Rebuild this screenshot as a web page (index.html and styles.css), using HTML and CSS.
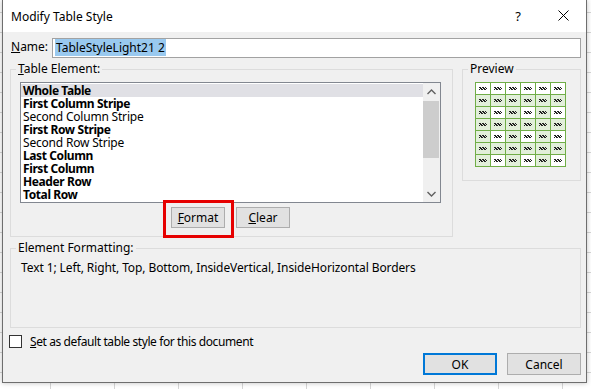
FILE: index.html
```html
<!DOCTYPE html>
<html>
    <head>
        <link rel="stylesheet" href="styles.css">
    </head>
    <body>
        <div class="dialog">
            <div class="titlebar">
                <span class="title">Modify Table Style</span>
                <span class="help">?</span>
                <span class="close">
                    <svg width="11" height="11" viewBox="0 0 11 11"><path d="M0.5 0.5 L10.5 10.5 M10.5 0.5 L0.5 10.5" stroke="#000" stroke-width="1" fill="none"/></svg>
                </span>
            </div>

            <div class="content">
                <div class="name-row">
                    <label class="name-label"><u>N</u>ame:</label>
                    <div class="text-input"><span class="selected">TableStyleLight21 2</span></div>
                </div>

                <div class="main">
                    <fieldset class="group table-element">
                        <legend><u>T</u>able Element:</legend>
                        <div class="listbox">
                            <div class="items">
                                <div class="item bold active">Whole Table</div>
                                <div class="item bold">First Column Stripe</div>
                                <div class="item">Second Column Stripe</div>
                                <div class="item bold">First Row Stripe</div>
                                <div class="item">Second Row Stripe</div>
                                <div class="item bold">Last Column</div>
                                <div class="item bold">First Column</div>
                                <div class="item bold">Header Row</div>
                                <div class="item bold">Total Row</div>
                            </div>
                            <div class="scrollbar">
                                <div class="arrow">
                                    <svg width="9" height="6" viewBox="0 0 9 6"><path d="M0.5 5 L4.5 1 L8.5 5" stroke="#606060" stroke-width="1.4" fill="none"/></svg>
                                </div>
                                <div class="thumb"></div>
                                <div class="track"></div>
                                <div class="arrow">
                                    <svg width="9" height="6" viewBox="0 0 9 6"><path d="M0.5 1 L4.5 5 L8.5 1" stroke="#606060" stroke-width="1.4" fill="none"/></svg>
                                </div>
                            </div>
                        </div>
                        <div class="list-buttons">
                            <span class="highlight"><button class="btn"><u>F</u>ormat</button></span>
                            <button class="btn"><u>C</u>lear</button>
                        </div>
                    </fieldset>

                    <fieldset class="group preview">
                        <legend>Preview</legend>
                        <div class="preview-grid">
                            <div class="cell"></div><div class="cell"></div><div class="cell"></div><div class="cell"></div><div class="cell"></div><div class="cell"></div>
                            <div class="cell g"></div><div class="cell g"></div><div class="cell g"></div><div class="cell g"></div><div class="cell g"></div><div class="cell g"></div>
                            <div class="cell g"></div><div class="cell"></div><div class="cell g"></div><div class="cell"></div><div class="cell g"></div><div class="cell"></div>
                            <div class="cell g"></div><div class="cell g"></div><div class="cell g"></div><div class="cell g"></div><div class="cell g"></div><div class="cell g"></div>
                            <div class="cell g"></div><div class="cell"></div><div class="cell g"></div><div class="cell"></div><div class="cell g"></div><div class="cell"></div>
                            <div class="cell g"></div><div class="cell g"></div><div class="cell g"></div><div class="cell g"></div><div class="cell g"></div><div class="cell g"></div>
                            <div class="cell g"></div><div class="cell"></div><div class="cell g"></div><div class="cell"></div><div class="cell g"></div><div class="cell"></div>
                        </div>
                    </fieldset>
                </div>

                <fieldset class="group formatting">
                    <legend>Element Formatting:</legend>
                    <p class="format-text">Text 1; Left, Right, Top, Bottom, InsideVertical, InsideHorizontal Borders</p>
                </fieldset>

                <div class="check-row">
                    <span class="checkbox"></span>
                    <span class="check-label"><u>S</u>et as default table style for this document</span>
                </div>

                <div class="footer">
                    <button class="btn wide default">OK</button>
                    <button class="btn wide">Cancel</button>
                </div>
            </div>
        </div>
    </body>
</html>
```

FILE: styles.css
```css
body, html {
    margin: 0;
    padding: 0;
    width: 591px;
    height: 389px;
    overflow: hidden;
}

body {
    font-family: 'Noto Sans', 'Liberation Sans', sans-serif;
    font-size: 12px;
    color: #000;
    background-color: #fff;
    background-image:
        linear-gradient(to right, #d6d6d6 1px, transparent 1px),
        linear-gradient(to bottom, #d6d6d6 1px, transparent 1px);
    background-size: 64px 100%, 100% 20px;
    background-position: 50px 0, 0 12px;
}

.dialog {
    margin-left: 2px;
    width: 585px;
    height: 383px;
    box-sizing: border-box;
    border: 1px solid #6e6e6e;
    border-top: none;
    background-color: #f0f0f0;
    box-shadow: 0 0 5px rgba(0,0,0,0.25);
}

.titlebar {
    height: 31px;
    background-color: #fff;
    display: flex;
    align-items: center;
    padding-left: 8px;
    padding-top: 1px;
}

.title {
    flex: 1;
    font-size: 12px;
}

.help {
    width: 44px;
    text-align: center;
    font-size: 13px;
    margin-top: -2px;
}

.close {
    width: 46px;
    display: flex;
    justify-content: center;
    margin-top: -2px;
}

.content {
    padding: 6px 5px 0 7px;
}

.name-row {
    display: flex;
    align-items: center;
    height: 20px;
}

.name-label {
    width: 41px;
    margin-left: 1px;
    margin-top: -3px;
}

.text-input {
    flex: 1;
    height: 20px;
    box-sizing: border-box;
    border: 1px solid #a2a2a2;
    background-color: #fff;
    padding: 2px 0 0 2px;
    line-height: 14px;
}

.selected {
    background-color: #99c9ef;
    padding: 0 1px;
}

.main {
    display: flex;
    gap: 9px;
    margin-top: 3px;
    align-items: flex-start;
}

.group {
    margin: 0;
    padding: 0;
    border: 1px solid #dcdcdc;
    box-sizing: border-box;
    min-width: 0;
}

.group legend {
    margin-left: 5px;
    padding: 0 2px;
    line-height: 16px;
}

.table-element {
    width: 443px;
    padding-bottom: 8px;
}

.listbox {
    margin: 5px 0 0 9px;
    width: 421px;
    height: 121px;
    box-sizing: border-box;
    border: 1px solid #828790;
    background-color: #fff;
    display: flex;
}

.items {
    flex: 1;
    padding-top: 1px;
}

.item {
    height: 13px;
    line-height: 13px;
    padding-left: 2px;
    white-space: nowrap;
    letter-spacing: -0.2px;
}

.item.bold {
    font-weight: bold;
    letter-spacing: -0.4px;
}

.item.active {
    background-color: #e0e0e5;
}

.scrollbar {
    width: 17px;
    background-color: #f0f0f0;
    display: flex;
    flex-direction: column;
}

.arrow {
    height: 17px;
    display: flex;
    align-items: center;
    justify-content: center;
}

.thumb {
    height: 57px;
    margin: 1px 1px 0 0;
    background-color: #cdcdcd;
}

.track {
    flex: 1;
}

.list-buttons {
    margin: 4px 0 0 9px;
    width: 421px;
    display: flex;
    justify-content: center;
    gap: 11px;
}

.btn {
    height: 21px;
    width: 54px;
    box-sizing: border-box;
    border: 1px solid #adadad;
    background-color: #e1e1e1;
    font-family: inherit;
    font-size: 12px;
    color: #000;
    padding: 0;
    line-height: 17px;
}

.highlight {
    position: relative;
    display: flex;
}

.highlight::after {
    content: "";
    position: absolute;
    top: -7px;
    left: -8px;
    right: -9px;
    bottom: -10px;
    border: 3px solid #e60000;
}

.preview {
    width: 119px;
    height: 120px;
}

.preview-grid {
    margin: 5px 0 0 12px;
    width: 91px;
    display: grid;
    grid-template-columns: repeat(6, 14px);
    grid-auto-rows: 11px;
    gap: 1px;
    padding: 1px;
    box-sizing: border-box;
    background-color: #70ad47;
}

.cell {
    background-color: #fff;
    display: flex;
    align-items: center;
    justify-content: center;
}

.cell.g {
    background-color: #e2efda;
}

.cell::after {
    content: "";
    width: 8px;
    height: 3px;
    background: repeating-linear-gradient(45deg, #222 0 1px, transparent 1px 2px);
}

.formatting {
    width: 100%;
    height: 88px;
    margin-top: 3px;
}

.format-text {
    margin: 4px 0 0 10px;
    line-height: 16px;
    letter-spacing: -0.1px;
}

.check-row {
    display: flex;
    align-items: center;
    gap: 8px;
    margin: 5px 0 0 -1px;
}

.check-label {
    letter-spacing: -0.4px;
}

.checkbox {
    width: 13px;
    height: 13px;
    box-sizing: border-box;
    border: 1px solid #333;
    background-color: #fff;
}

.footer {
    display: flex;
    justify-content: flex-end;
    gap: 10px;
    margin-top: 3px;
}

.btn.wide {
    width: 74px;
    height: 22px;
}

.btn.default {
    border: 2px solid #0078d7;
}
```
